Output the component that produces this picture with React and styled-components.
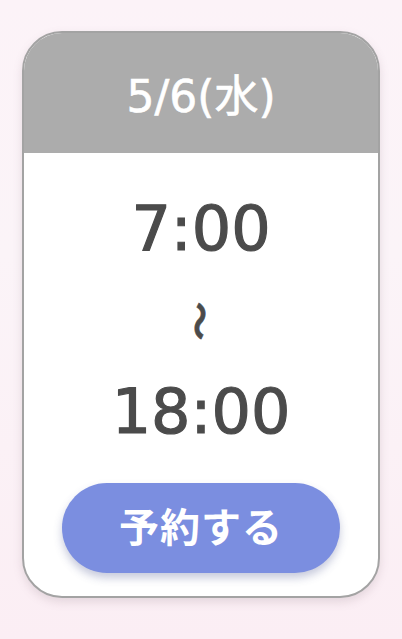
import React from "react";
import styled, { createGlobalStyle } from "styled-components";

const GlobalStyle = createGlobalStyle`
  html, body {
    margin: 0;
    padding: 0;
  }
  body {
    width: 402px;
    height: 639px;
    overflow: hidden;
    background: linear-gradient(180deg, #fcf3f8 0%, #fbf4f8 40%, #fbeef4 100%);
    font-family: "DejaVu Sans", "Noto Sans CJK JP", sans-serif;
  }
`;

const Page = styled.div`
  display: flex;
  justify-content: center;
  padding-top: 31px;
`;

const Card = styled.div`
  width: 358px;
  height: 567px;
  box-sizing: border-box;
  border: 2px solid #a3a3a3;
  border-radius: 40px;
  background: #fff;
  overflow: hidden;
  display: flex;
  flex-direction: column;
  box-shadow: 0 4px 10px rgba(120, 100, 110, 0.18);
`;

const Header = styled.div`
  height: 120px;
  background: #acacac;
  display: flex;
  align-items: center;
  justify-content: center;
  color: #fff;
  font-size: 44px;
  font-weight: 400;
  -webkit-text-stroke: 0.6px #fff;
`;

const Body = styled.div`
  flex: 1;
  display: flex;
  flex-direction: column;
  align-items: center;
`;

const Time = styled.div`
  font-size: 62px;
  font-weight: 400;
  color: #4b4b4b;
  -webkit-text-stroke: 1.2px #4b4b4b;
  line-height: 1;
  margin-top: ${({ $top }) => $top}px;
`;

const Wave = styled.div`
  font-family: "Noto Sans CJK JP", sans-serif;
  font-size: 34px;
  font-weight: 700;
  color: #4b4b4b;
  -webkit-text-stroke: 0.6px #4b4b4b;
  line-height: 1;
  transform: rotate(90deg) scaleX(1.15);
  margin-top: ${({ $top }) => $top}px;
`;

const ReserveButton = styled.button`
  margin-top: 40px;
  width: 278px;
  height: 90px;
  padding: 0 0 6px;
  border: none;
  border-radius: 45px;
  background: #7b8ee0;
  color: #fff;
  font-family: "Noto Sans CJK JP", sans-serif;
  font-size: 40px;
  font-weight: 700;
  letter-spacing: 1px;
  box-shadow: 0 5px 8px rgba(70, 80, 140, 0.3);
  display: flex;
  align-items: center;
  justify-content: center;
`;

export default function App() {
  return (
    <>
      <GlobalStyle />
      <Page>
        <Card>
          <Header>5/6(水)</Header>
          <Body>
            <Time $top={45}>7:00</Time>
            <Wave $top={44}>〜</Wave>
            <Time $top={43}>18:00</Time>
            <ReserveButton>予約する</ReserveButton>
          </Body>
        </Card>
      </Page>
    </>
  );
}
